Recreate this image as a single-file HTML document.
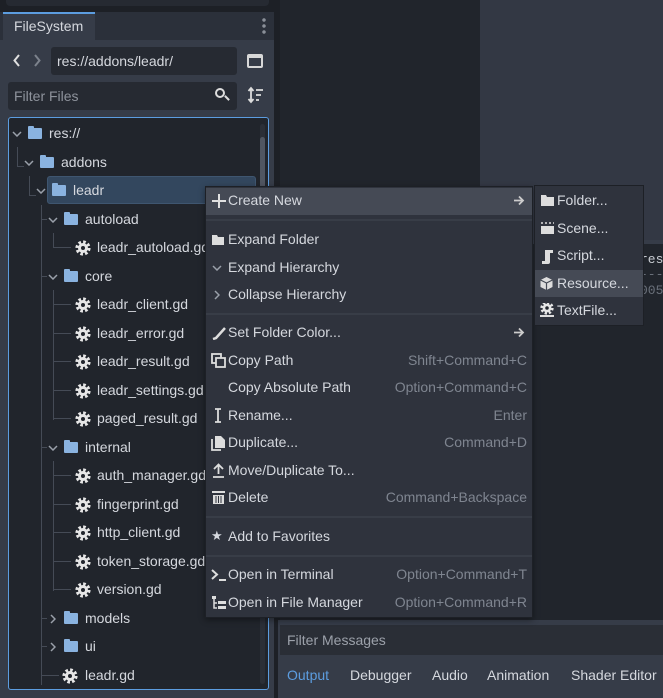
<!DOCTYPE html><html><head><style>
*{margin:0;padding:0;box-sizing:border-box}
body{width:663px;height:698px;background:#1d2026;font-family:"Liberation Sans","DejaVu Sans",sans-serif;font-size:14px;color:#d5d8de;position:relative;overflow:hidden}
.a{position:absolute;white-space:nowrap}
.fold{position:absolute;width:14px;height:11px;background:#8ab3e0;border-radius:1px}
.fold:before{content:"";position:absolute;left:0;top:-2px;width:6px;height:3px;background:#8ab3e0;border-radius:1px 1px 0 0}
.g{position:absolute;width:16px;height:16px}
.cd{position:absolute;width:10px;height:6px}
.cr{position:absolute;width:6px;height:10px}
.ln{position:absolute;background:#454b56}
.mi{position:absolute;left:228px;color:#d5d8de}
.sc{position:absolute;right:136px;color:#7f8590;text-align:right}
.ic{position:absolute;left:211px;color:#d5d8de;font-size:13px}
.si{position:absolute;left:557px}
</style></head><body>
<svg width="0" height="0" style="position:absolute"><defs>
<symbol id="gear" viewBox="0 0 16 16"><circle cx="8" cy="8" r="6" fill="none" stroke="#e6e6e6" stroke-width="3.2" stroke-dasharray="2.6 2.1"/><circle cx="8" cy="8" r="5" fill="#e6e6e6"/><circle cx="8" cy="8" r="2" fill="#21252c"/></symbol>
<symbol id="down" viewBox="0 0 10 6"><path d="M1 1l4 4 4-4" stroke="#9aa0aa" fill="none" stroke-width="1.5"/></symbol>
<symbol id="right" viewBox="0 0 6 10"><path d="M1 1l4 4-4 4" stroke="#9aa0aa" fill="none" stroke-width="1.5"/></symbol>
</defs></svg>
<div class="a" style="left:6px;top:0;width:263px;height:6px;background:#262a32;border-radius:0 0 4px 4px"></div>
<div class="a" style="left:0;top:12px;width:274px;height:686px;background:#2b303a"></div>
<div class="a" style="left:3px;top:12px;width:92px;height:28px;background:#363c48;border-top:2px solid #5c9de0"></div>
<div class="a" style="left:14px;top:18px;">FileSystem</div>
<div class="a" style="left:262px;top:17px;width:4px;height:18px;background:radial-gradient(circle,#8a8f98 1.5px,transparent 2px) 0 0/4px 6px"></div>
<div class="a" style="left:0;top:40px;width:274px;height:658px;background:#363c48"></div>
<svg class="a" style="left:13px;top:54px" width="8" height="13"><path d="M6 1L1.5 6.5 6 12" stroke="#e0e0e0" fill="none" stroke-width="2"/></svg>
<svg class="a" style="left:33px;top:54px" width="8" height="13"><path d="M2 1l4.5 5.5L2 12" stroke="#7c828c" fill="none" stroke-width="2"/></svg>
<div class="a" style="left:51px;top:47px;width:186px;height:28px;background:#262a32;border-radius:3px"></div>
<div class="a" style="left:57px;top:53px">res://addons/leadr/</div>
<div class="a" style="left:247px;top:54px;width:16px;height:14px;border:2px solid #d8d8d8;border-top-width:4px;border-radius:2px"></div>
<div class="a" style="left:8px;top:82px;width:229px;height:28px;background:#262a32;border-radius:3px"></div>
<div class="a" style="left:14px;top:88px;color:#8e939c">Filter Files</div>
<div class="a" style="left:215px;top:88px;width:10px;height:10px;border:2px solid #ddd;border-radius:50%"></div>
<div class="a" style="left:224px;top:97px;width:6px;height:2px;background:#ddd;transform:rotate(45deg)"></div>
<svg class="a" style="left:247px;top:86px" width="18" height="18"><path d="M4 2v14M1.5 5L4 2l2.5 3M1.5 13L4 16l2.5-3" stroke="#ddd" fill="none" stroke-width="1.8"/><path d="M9 4h7M9 9h5M9 14h3" stroke="#ddd" stroke-width="1.8"/></svg>
<div class="a" style="left:8px;top:117px;width:261px;height:573px;background:#21252c;border:1px solid #5c9de0;border-radius:3px"></div>
<div class="a" style="left:260px;top:124px;width:5px;height:560px;background:#2b2f37;border-radius:3px"></div>
<div class="a" style="left:260px;top:137px;width:5px;height:56px;background:#505661;border-radius:3px"></div>
<div class="ln" style="left:17px;top:147px;width:1px;height:20px"></div><div class="ln" style="left:17px;top:166px;width:7px;height:1px"></div>
<div class="ln" style="left:29px;top:176px;width:1px;height:20px"></div><div class="ln" style="left:29px;top:195px;width:7px;height:1px"></div>
<div class="ln" style="left:41px;top:205px;width:1px;height:480px"></div>
<div class="ln" style="left:41px;top:219px;width:6px;height:1px"></div><div class="ln" style="left:41px;top:276px;width:6px;height:1px"></div><div class="ln" style="left:41px;top:447px;width:6px;height:1px"></div>
<div class="ln" style="left:41px;top:618px;width:6px;height:1px"></div><div class="ln" style="left:41px;top:646px;width:6px;height:1px"></div><div class="ln" style="left:41px;top:675px;width:18px;height:1px"></div>
<div class="ln" style="left:53px;top:233px;width:1px;height:15px"></div><div class="ln" style="left:53px;top:247px;width:18px;height:1px"></div>
<div class="ln" style="left:53px;top:290px;width:1px;height:130px"></div>
<div class="ln" style="left:53px;top:304px;width:18px;height:1px"></div><div class="ln" style="left:53px;top:333px;width:18px;height:1px"></div><div class="ln" style="left:53px;top:361px;width:18px;height:1px"></div><div class="ln" style="left:53px;top:390px;width:18px;height:1px"></div><div class="ln" style="left:53px;top:418px;width:18px;height:1px"></div>
<div class="ln" style="left:53px;top:461px;width:1px;height:130px"></div>
<div class="ln" style="left:53px;top:475px;width:18px;height:1px"></div><div class="ln" style="left:53px;top:504px;width:18px;height:1px"></div><div class="ln" style="left:53px;top:532px;width:18px;height:1px"></div><div class="ln" style="left:53px;top:561px;width:18px;height:1px"></div><div class="ln" style="left:53px;top:589px;width:18px;height:1px"></div>
<div class="a" style="left:47px;top:176px;width:209px;height:28px;background:#33475e;border:1px solid #3f5670;border-radius:3px"></div>
<svg class="cd" style="left:12px;top:131px"><use href="#down"/></svg><div class="fold" style="left:28px;top:128px"></div><div class="a" style="left:49px;top:125px">res://</div>
<svg class="cd" style="left:24px;top:160px"><use href="#down"/></svg><div class="fold" style="left:40px;top:157px"></div><div class="a" style="left:61px;top:154px">addons</div>
<svg class="cd" style="left:36px;top:188px"><use href="#down"/></svg><div class="fold" style="left:52px;top:185px"></div><div class="a" style="left:73px;top:182px">leadr</div>
<svg class="cd" style="left:48px;top:217px"><use href="#down"/></svg><div class="fold" style="left:64px;top:214px"></div><div class="a" style="left:85px;top:211px">autoload</div>
<svg class="g" style="left:75px;top:240px"><use href="#gear"/></svg><div class="a" style="left:97px;top:239px">leadr_autoload.gd</div>
<svg class="cd" style="left:48px;top:274px"><use href="#down"/></svg><div class="fold" style="left:64px;top:271px"></div><div class="a" style="left:85px;top:268px">core</div>
<svg class="g" style="left:75px;top:297px"><use href="#gear"/></svg><div class="a" style="left:97px;top:296px">leadr_client.gd</div>
<svg class="g" style="left:75px;top:326px"><use href="#gear"/></svg><div class="a" style="left:97px;top:325px">leadr_error.gd</div>
<svg class="g" style="left:75px;top:354px"><use href="#gear"/></svg><div class="a" style="left:97px;top:353px">leadr_result.gd</div>
<svg class="g" style="left:75px;top:383px"><use href="#gear"/></svg><div class="a" style="left:97px;top:382px">leadr_settings.gd</div>
<svg class="g" style="left:75px;top:411px"><use href="#gear"/></svg><div class="a" style="left:97px;top:410px">paged_result.gd</div>
<svg class="cd" style="left:48px;top:445px"><use href="#down"/></svg><div class="fold" style="left:64px;top:442px"></div><div class="a" style="left:85px;top:439px">internal</div>
<svg class="g" style="left:75px;top:468px"><use href="#gear"/></svg><div class="a" style="left:97px;top:467px">auth_manager.gd</div>
<svg class="g" style="left:75px;top:497px"><use href="#gear"/></svg><div class="a" style="left:97px;top:496px">fingerprint.gd</div>
<svg class="g" style="left:75px;top:525px"><use href="#gear"/></svg><div class="a" style="left:97px;top:524px">http_client.gd</div>
<svg class="g" style="left:75px;top:554px"><use href="#gear"/></svg><div class="a" style="left:97px;top:553px">token_storage.gd</div>
<svg class="g" style="left:75px;top:582px"><use href="#gear"/></svg><div class="a" style="left:97px;top:581px">version.gd</div>
<svg class="cr" style="left:50px;top:614px"><use href="#right"/></svg><div class="fold" style="left:64px;top:613px"></div><div class="a" style="left:85px;top:610px">models</div>
<svg class="cr" style="left:50px;top:642px"><use href="#right"/></svg><div class="fold" style="left:64px;top:641px"></div><div class="a" style="left:85px;top:638px">ui</div>
<svg class="g" style="left:62px;top:668px"><use href="#gear"/></svg><div class="a" style="left:85px;top:667px">leadr.gd</div>
<div class="a" style="left:280px;top:0;width:200px;height:245px;background:#21252c"></div>
<div class="a" style="left:480px;top:0;width:183px;height:240px;background:#333844"></div>
<div class="a" style="left:280px;top:240px;width:383px;height:380px;background:#21252c;border-top:4px solid #363c48"></div>
<div class="a" style="left:640px;top:252px;font-family:'Liberation Mono',monospace;font-size:13px;color:#c8ccd2">res</div>
<div class="a" style="left:640px;top:267px;font-family:'Liberation Mono',monospace;font-size:13px;color:#6a707a">---</div>
<div class="a" style="left:640px;top:283px;font-family:'Liberation Mono',monospace;font-size:13px;color:#6a707a">005</div>
<div class="a" style="left:278px;top:620px;width:385px;height:78px;background:#363c48"></div>
<div class="a" style="left:280px;top:625px;width:383px;height:30px;background:#2a2e36"></div>
<div class="a" style="left:287px;top:632px;color:#9ca1aa">Filter Messages</div>
<div class="a" style="left:287px;top:667px;color:#5c9de0">Output</div>
<div class="a" style="left:350px;top:667px">Debugger</div>
<div class="a" style="left:432px;top:667px">Audio</div>
<div class="a" style="left:487px;top:667px">Animation</div>
<div class="a" style="left:571px;top:667px">Shader Editor</div>
<div class="a" style="left:205px;top:186px;width:328px;height:432px;background:#2f333d;border:1px solid #1d2026;box-shadow:0 2px 6px rgba(0,0,0,.4)"></div>
<div class="a" style="left:206px;top:188px;width:326px;height:27px;background:#454a55"></div>
<div class="a" style="left:206px;top:219px;width:326px;height:2px;background:#383d47"></div>
<div class="a" style="left:206px;top:313px;width:326px;height:2px;background:#383d47"></div>
<div class="a" style="left:206px;top:516px;width:326px;height:2px;background:#383d47"></div>
<div class="a" style="left:206px;top:555px;width:326px;height:2px;background:#383d47"></div>
<svg class="a" style="left:211px;top:193px" width="16" height="16"><path d="M8 1v14M1 8h14" stroke="#e0e0e0" stroke-width="2"/></svg><div class="mi" style="top:192px">Create New</div>
<svg class="a" style="left:513px;top:195px" width="12" height="11"><path d="M1 5.5h9M6 1.5l4 4-4 4" stroke="#ccc" fill="none" stroke-width="1.8"/></svg>
<svg class="a" style="left:211px;top:233px" width="15" height="13"><path d="M1 2h5l1 2h6v8H1z" fill="#ddd"/></svg><div class="mi" style="top:231px">Expand Folder</div>
<svg class="cd" style="left:212px;top:265px"><use href="#down"/></svg><div class="mi" style="top:259px">Expand Hierarchy</div>
<svg class="cr" style="left:214px;top:290px"><use href="#right"/></svg><div class="mi" style="top:286px">Collapse Hierarchy</div>
<svg class="a" style="left:211px;top:326px" width="16" height="14"><path d="M2 13l3-1 9-10" stroke="#ddd" fill="none" stroke-width="2.5"/></svg><div class="mi" style="top:324px">Set Folder Color...</div>
<svg class="a" style="left:513px;top:327px" width="12" height="11"><path d="M1 5.5h9M6 1.5l4 4-4 4" stroke="#ccc" fill="none" stroke-width="1.8"/></svg>
<svg class="a" style="left:211px;top:353px" width="15" height="15"><rect x="1" y="1" width="9" height="9" fill="none" stroke="#ddd" stroke-width="1.8"/><rect x="5" y="5" width="9" height="9" fill="#2f333d" stroke="#ddd" stroke-width="1.8"/></svg><div class="mi" style="top:352px">Copy Path</div><div class="sc" style="top:352px">Shift+Command+C</div>
<div class="mi" style="top:379px">Copy Absolute Path</div><div class="sc" style="top:379px">Option+Command+C</div>
<svg class="a" style="left:213px;top:408px" width="10" height="15"><path d="M2 1h6M2 14h6M5 1v13" stroke="#ddd" stroke-width="1.8"/></svg><div class="mi" style="top:407px">Rename...</div><div class="sc" style="top:407px">Enter</div>
<svg class="a" style="left:211px;top:435px" width="15" height="16"><path d="M4 1h6l4 4v8H4z" fill="#ddd"/><path d="M1 4v11h9" stroke="#ddd" fill="none" stroke-width="1.8"/></svg><div class="mi" style="top:434px">Duplicate...</div><div class="sc" style="top:434px">Command+D</div>
<svg class="a" style="left:212px;top:463px" width="13" height="15"><path d="M6.5 11V2M2 6l4.5-4.5L11 6M1 14h11" stroke="#ddd" fill="none" stroke-width="1.8"/></svg><div class="mi" style="top:462px">Move/Duplicate To...</div>
<svg class="a" style="left:211px;top:490px" width="15" height="15"><path d="M1 2h13" stroke="#ddd" stroke-width="2"/><path d="M2 5h11v9H2z" fill="#ddd"/><path d="M5 6v7M7.5 6v7M10 6v7" stroke="#2f333d" stroke-width="1"/></svg><div class="mi" style="top:489px">Delete</div><div class="sc" style="top:489px">Command+Backspace</div>
<div class="ic" style="top:528px">★</div><div class="mi" style="top:528px">Add to Favorites</div>
<svg class="a" style="left:211px;top:568px" width="16" height="14"><path d="M1 2l5 4.5L1 11" stroke="#ddd" fill="none" stroke-width="2"/><path d="M8 12h7" stroke="#ddd" stroke-width="2"/></svg><div class="mi" style="top:566px">Open in Terminal</div><div class="sc" style="top:566px">Option+Command+T</div>
<svg class="a" style="left:211px;top:595px" width="16" height="15"><rect x="1" y="1" width="4" height="3" fill="#ddd"/><path d="M3 4v9h3M3 8h3" stroke="#ddd" fill="none" stroke-width="1.5"/><rect x="7" y="6" width="8" height="3" fill="#ddd"/><rect x="7" y="11" width="8" height="3" fill="#ddd"/></svg><div class="mi" style="top:594px">Open in File Manager</div><div class="sc" style="top:594px">Option+Command+R</div>
<div class="a" style="left:534px;top:185px;width:110px;height:141px;background:#2f333d;border:1px solid #1d2026"></div>
<div class="a" style="left:535px;top:270px;width:108px;height:27px;background:#454a55"></div>
<svg class="a" style="left:540px;top:194px" width="15" height="13"><path d="M1 1h5l1 2h7v9H1z" fill="#ddd"/></svg><div class="si a" style="top:192px">Folder...</div>
<svg class="a" style="left:540px;top:222px" width="15" height="13"><path d="M1 1h2M5 1h2M9 1h2M13 1h1" stroke="#ddd" stroke-width="1.5"/><rect x="1" y="4" width="13" height="8" fill="#ddd"/></svg><div class="si a" style="top:220px">Scene...</div>
<svg class="a" style="left:540px;top:249px" width="15" height="15"><path d="M5 1h8v3h-3v9a2 2 0 0 1-2 2H2v-3h3z" fill="#ddd"/></svg><div class="si a" style="top:247px">Script...</div>
<svg class="a" style="left:539px;top:276px" width="15" height="15"><path d="M7.5 1l6 3v7l-6 3-6-3V4z" fill="#ddd"/><path d="M1.5 4l6 3 6-3M7.5 7v7" stroke="#454a55" fill="none" stroke-width="1.2"/></svg><div class="si a" style="top:275px">Resource...</div>
<svg class="a" style="left:539px;top:303px" width="16" height="16"><use href="#gear" x="0" y="-2" width="16" height="14"/><path d="M1 13h14" stroke="#ddd" stroke-width="2"/></svg><div class="si a" style="top:302px">TextFile...</div>
</body></html>
